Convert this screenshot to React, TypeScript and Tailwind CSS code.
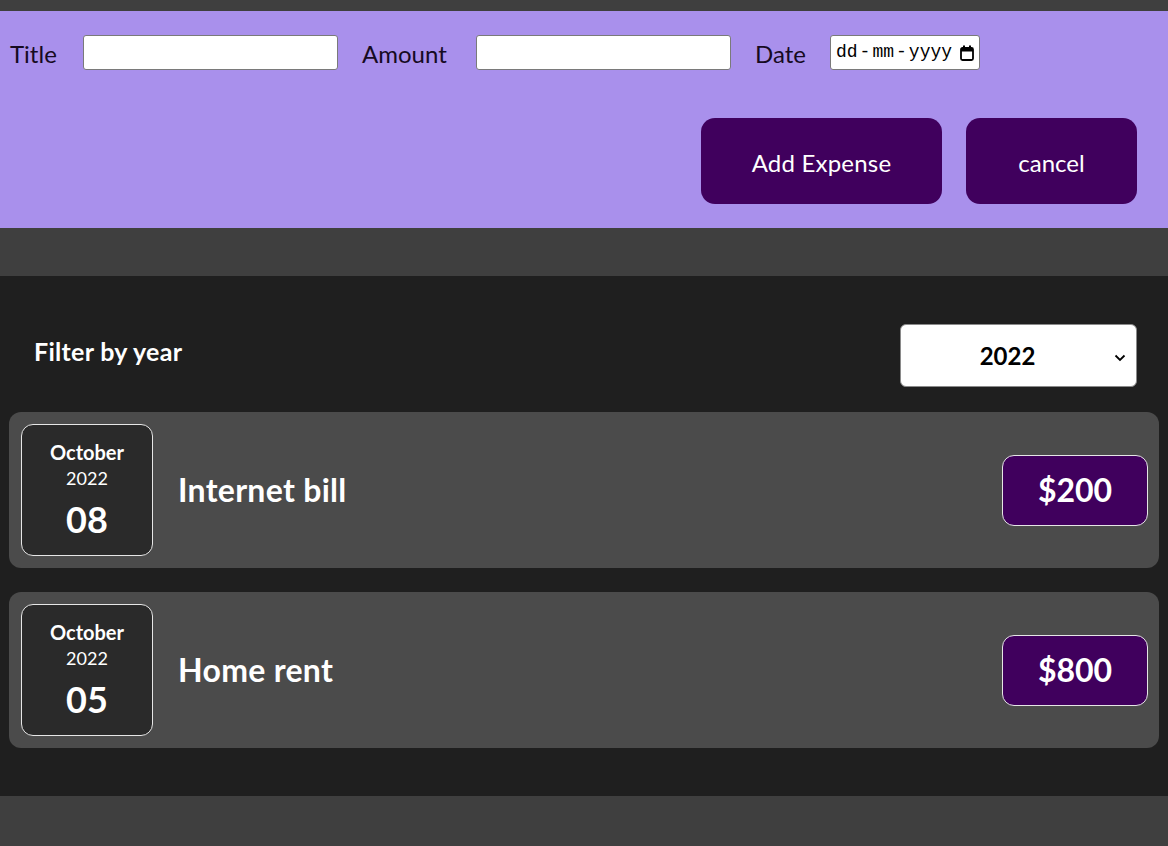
import React from "react";

function DateBox({ day }: { day: string }) {
  return (
    <div className="w-[132px] h-[132px] shrink-0 rounded-[12px] border border-[#e6e6e6] bg-[#2a2a2a] flex flex-col items-center justify-center text-white">
      <div className="flex flex-col items-center mt-[6px]">
        <div className="text-[20px] font-bold leading-[24px]">October</div>
        <div className="text-[18px] leading-[28px]">2022</div>
        <div className="text-[36px] font-bold leading-[54px]">{day}</div>
      </div>
    </div>
  );
}

function Card({ day, title, amount }: { day: string; title: string; amount: string }) {
  return (
    <div className="mx-[9px] h-[156px] rounded-[12px] bg-[#4b4b4b] flex items-center px-[12px]">
      <DateBox day={day} />
      <div className="ml-[25px] flex-1 text-white text-[32px] font-bold tracking-[0.3px]">{title}</div>
      <div className="w-[146px] h-[71px] mr-[-1px] rounded-[12px] border border-[#e6e6e6] bg-[#40005d] flex items-center justify-center text-white text-[32px] font-bold">
        {amount}
      </div>
    </div>
  );
}

export default function App() {
  return (
    <div className="min-h-[846px] bg-[#3f3f3f] pt-[11px] font-['Lato','Source_Sans_Pro',sans-serif]">
      <div className="h-[217px] bg-[#a990ec] pt-[24px]">
        <div className="flex items-center h-[35px] text-[24px] text-[#160a22]">
          <span className="ml-[10px] w-[49px] pt-[2px]">Title</span>
          <div className="ml-[24px] w-[255px] h-[35px] bg-white border border-[#7a7a7a] rounded-[3px]" />
          <span className="ml-[24px] w-[90px] pt-[2px]">Amount</span>
          <div className="ml-[24px] w-[255px] h-[35px] bg-white border border-[#7a7a7a] rounded-[3px]" />
          <span className="ml-[24px] w-[51px] pt-[2px]">Date</span>
          <div className="ml-[24px] w-[150px] h-[35px] bg-white border border-[#7a7a7a] rounded-[3px] flex items-center pl-[5px] pr-[4px] text-black">
            <span className="font-['Liberation_Mono',monospace] text-[18px] flex items-center">
              <span>dd</span>
              <span className="px-[2px]">-</span>
              <span>mm</span>
              <span className="px-[2px]">-</span>
              <span>yyyy</span>
            </span>
            <svg width="16" height="18" viewBox="0 0 16 18" className="ml-auto">
              <rect x="2" y="4" width="12" height="12" rx="1.5" fill="none" stroke="black" strokeWidth="1.8" />
              <rect x="2" y="4" width="12" height="3.5" fill="black" />
              <rect x="4" y="1.5" width="2" height="3" fill="black" />
              <rect x="10" y="1.5" width="2" height="3" fill="black" />
            </svg>
          </div>
        </div>
        <div className="flex justify-end gap-[24px] mt-[48px] pr-[31px]">
          <button className="w-[241px] h-[86px] rounded-[14px] bg-[#40005d] text-white text-[24px] pt-[3px] tracking-[0.2px]">Add Expense</button>
          <button className="w-[171px] h-[86px] rounded-[14px] bg-[#40005d] text-white text-[24px] pt-[3px]">cancel</button>
        </div>
      </div>

      <div className="mt-[48px] h-[520px] bg-[#1f1f1f] pt-[48px]">
        <div className="flex items-center justify-between pl-[34px] pr-[31px] h-[63px]">
          <span className="text-white text-[25px] font-bold pb-[8px] tracking-[0.3px]">Filter by year</span>
          <div className="relative w-[237px] h-[63px] bg-white rounded-[6px] border border-[#8a8a8a] flex items-center justify-center pr-[22px]">
            <span className="text-black text-[24px] font-bold">2022</span>
            <svg width="12" height="8" viewBox="0 0 12 8" className="absolute right-[10px] top-[29px]">
              <path d="M1.5 1.5 L6 6 L10.5 1.5" fill="none" stroke="black" strokeWidth="1.8" />
            </svg>
          </div>
        </div>
        <div className="mt-[25px] flex flex-col gap-[24px]">
          <Card day="08" title="Internet bill" amount="$200" />
          <Card day="05" title="Home rent" amount="$800" />
        </div>
      </div>
    </div>
  );
}
